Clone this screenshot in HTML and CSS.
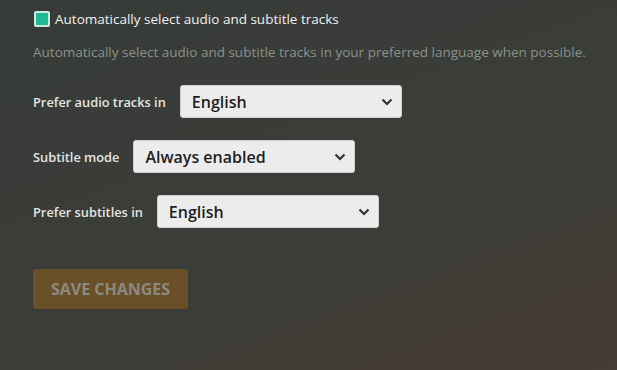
FILE: index.html
```html
<!DOCTYPE html>
<html lang="en">
<head>
    <meta charset="UTF-8">
    <title>Playback Settings</title>
    <link rel="stylesheet" href="styles.css">
</head>
<body>
    <div class="settings">
        <label class="check-row">
            <span class="checkbox"></span>
            <span>Automatically select audio and subtitle tracks</span>
        </label>
        <p class="hint">Automatically select audio and subtitle tracks in your preferred language when possible.</p>

        <div class="field">
            <span class="field-label">Prefer audio tracks in</span>
            <div class="select">
                <span>English</span>
                <svg class="chevron" width="12" height="8" viewBox="0 0 12 8"><path d="M1.5 1.5 L6 6 L10.5 1.5" fill="none" stroke="#333" stroke-width="2.2"/></svg>
            </div>
        </div>

        <div class="field">
            <span class="field-label">Subtitle mode</span>
            <div class="select">
                <span>Always enabled</span>
                <svg class="chevron" width="12" height="8" viewBox="0 0 12 8"><path d="M1.5 1.5 L6 6 L10.5 1.5" fill="none" stroke="#333" stroke-width="2.2"/></svg>
            </div>
        </div>

        <div class="field">
            <span class="field-label">Prefer subtitles in</span>
            <div class="select">
                <span>English</span>
                <svg class="chevron" width="12" height="8" viewBox="0 0 12 8"><path d="M1.5 1.5 L6 6 L10.5 1.5" fill="none" stroke="#333" stroke-width="2.2"/></svg>
            </div>
        </div>

        <button class="save" disabled>Save Changes</button>
    </div>
</body>
</html>
```

FILE: styles.css
```css
html, body {
    height: 100%;
}
body {
    margin: 0;
    font-family: 'Open Sans', sans-serif;
    background: linear-gradient(160deg, #373b38 0%, #3b3d38 55%, #453c34 100%);
    color: #eee;
    overflow: hidden;
}
.settings {
    padding: 8px 33px;
}
.check-row {
    display: flex;
    align-items: center;
    gap: 5px;
    font-size: 13.5px;
    color: #f0f0f0;
    height: 21px;
    margin-left: 1px;
}
.checkbox {
    width: 12px;
    height: 12px;
    background: #1fb996;
    border: 2px solid #c9ecdf;
    border-radius: 2px;
}
.hint {
    margin: 14px 0 24px;
    font-size: 13.5px;
    color: #8b918c;
    white-space: nowrap;
}
.field {
    display: flex;
    align-items: center;
    gap: 14px;
    margin-bottom: 22px;
}
.field-label {
    font-size: 12.8px;
    font-weight: 600;
    color: #e4e4e4;
}
.select {
    display: flex;
    align-items: center;
    justify-content: space-between;
    padding: 0 8px 0 11px;
    box-sizing: border-box;
    width: 222px;
    height: 33px;
    background: #ececec;
    border: 1px solid #cfcfcf;
    border-radius: 3px;
    font-size: 16px;
    font-weight: 600;
    color: #1e1e1e;
}
.save {
    margin-top: 19px;
    width: 155px;
    height: 40px;
    padding: 0;
    background: #6a5029;
    border: none;
    border-radius: 3px;
    font-family: 'Open Sans', sans-serif;
    font-size: 16px;
    font-weight: 700;
    text-transform: uppercase;
    color: #8c8a80;
}
```
